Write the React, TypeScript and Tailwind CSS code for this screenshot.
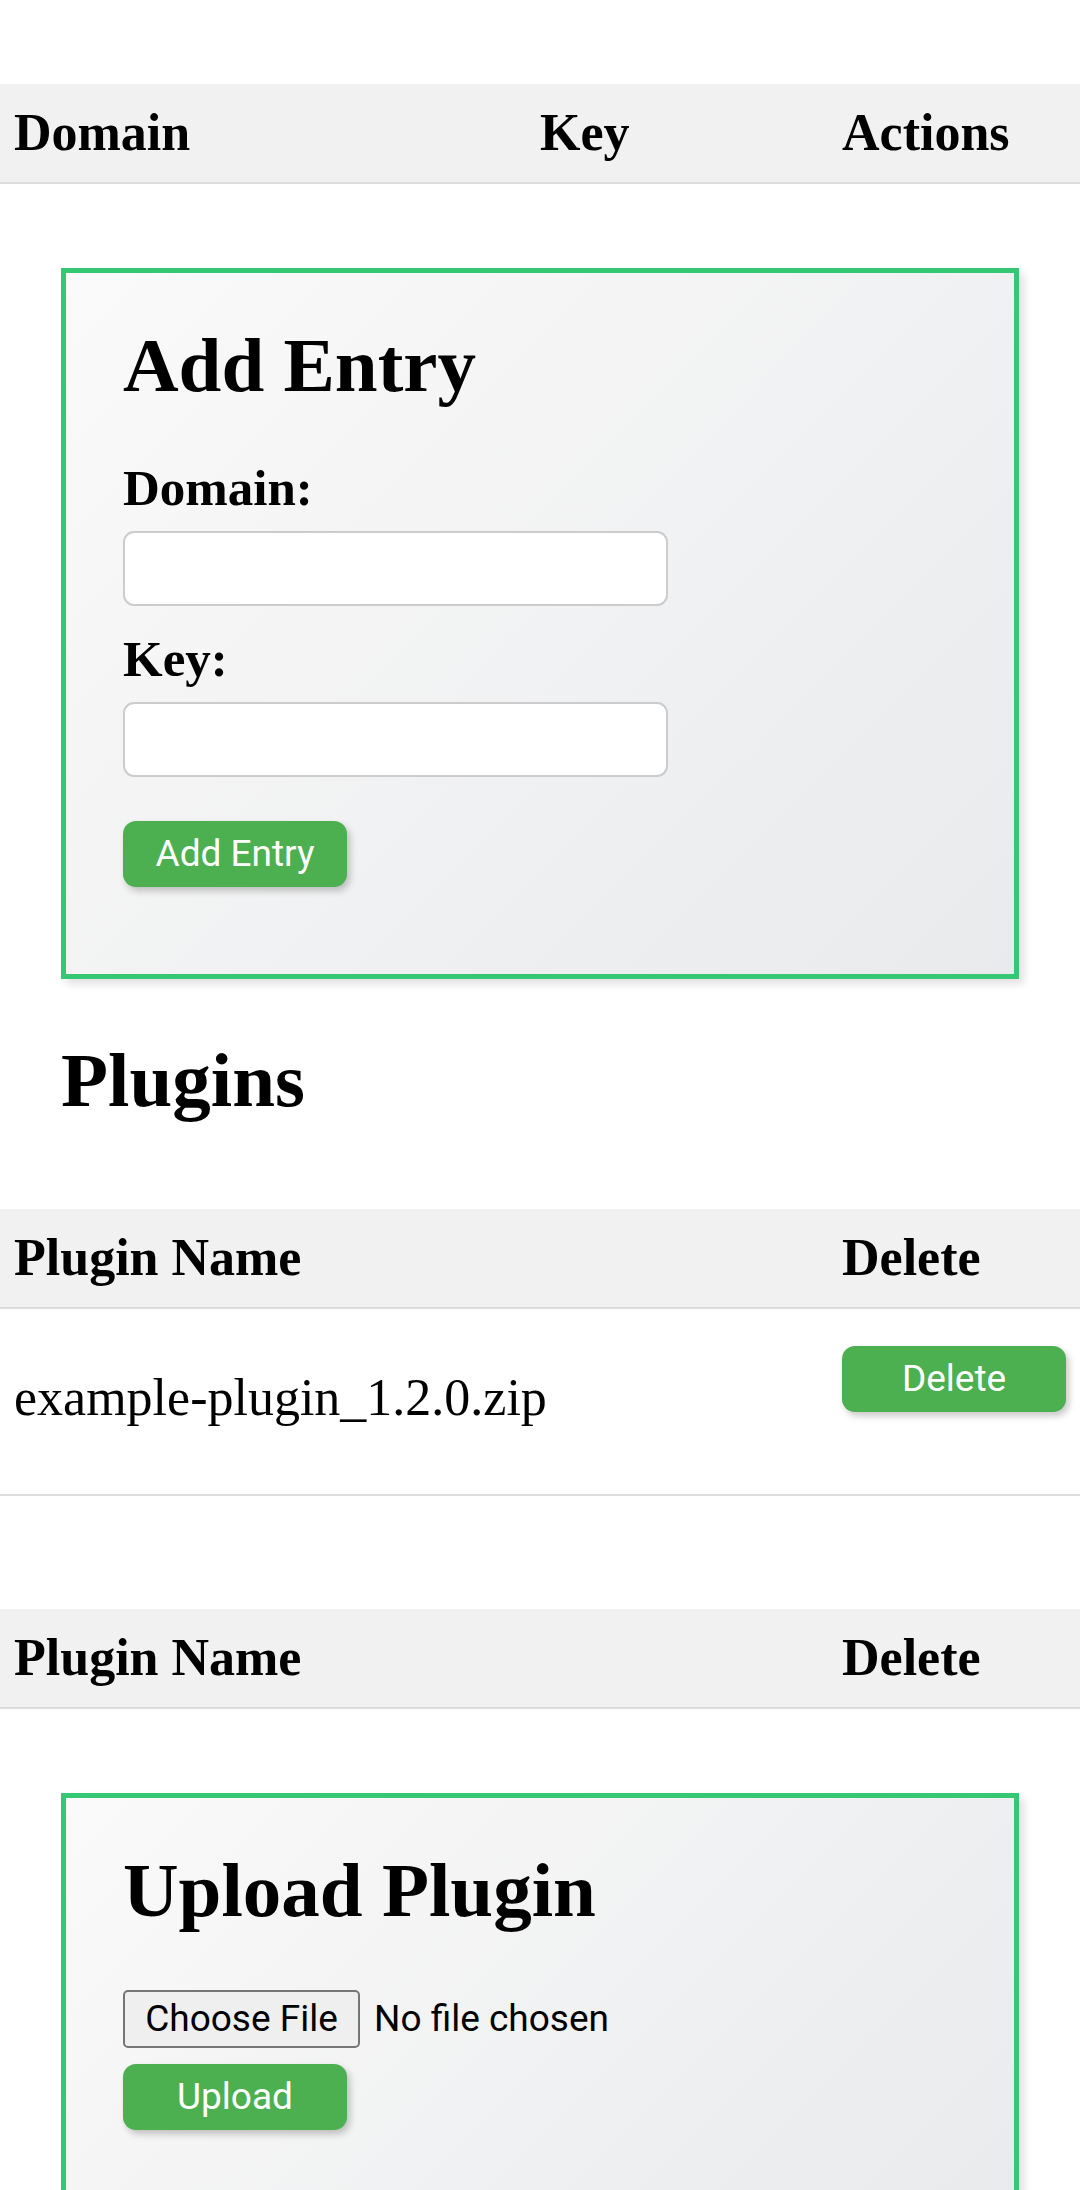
import React from "react";

const serif = "font-['Liberation_Serif',serif]";
const sans = "font-['Roboto',sans-serif]";

function HeaderRow({ cols, template }: { cols: string[]; template: string }) {
  return (
    <div className={`grid ${template} h-[100px] items-center bg-[#f1f1f1] border-b-2 border-[#dddddd]`}>
      {cols.map((c) => (
        <div key={c} className="px-[14px] text-[52px] leading-[60px] font-bold text-black">
          {c}
        </div>
      ))}
    </div>
  );
}

function GreenButton({ label }: { label: string }) {
  return (
    <button
      className={`${sans} w-[224px] h-[66px] rounded-[13px] bg-[#4caf50] text-white text-[37px] leading-[66px] shadow-[3px_4px_7px_rgba(0,0,0,0.22)]`}
    >
      {label}
    </button>
  );
}

function Card({ children }: { children: React.ReactNode }) {
  return (
    <div className="mx-[61px] border-[5px] border-[#35c774] bg-[linear-gradient(135deg,#fafafa,#e9eaec)] px-[57px] pt-[49px] pb-[87px] shadow-[5px_5px_8px_rgba(0,0,0,0.12)]">
      {children}
    </div>
  );
}

function TextInput() {
  return (
    <input
      type="text"
      className="mt-[14px] block w-[545px] h-[75px] rounded-[11px] border-2 border-[#cccccc] bg-white px-[14px] text-[37px] outline-none"
    />
  );
}

export default function App() {
  return (
    <div className={`${serif} min-h-screen bg-white pt-[84px] text-black`}>
      <HeaderRow cols={["Domain", "Key", "Actions"]} template="grid-cols-[526px_302px_1fr]" />

      <div className="mt-[84px]">
        <Card>
          <h2 className="text-[77px] leading-[86px] font-bold">Add Entry</h2>
          <label className="mt-[51px] block text-[51px] leading-[58px] font-bold">Domain:</label>
          <TextInput />
          <label className="mt-[24px] block text-[51px] leading-[58px] font-bold">Key:</label>
          <TextInput />
          <div className="mt-[44px]">
            <GreenButton label="Add Entry" />
          </div>
        </Card>
      </div>

      <h2 className="mt-[58px] ml-[61px] text-[77px] leading-[86px] font-bold">Plugins</h2>

      <div className="mt-[86px]">
        <HeaderRow cols={["Plugin Name", "Delete"]} template="grid-cols-[828px_1fr]" />
        <div className="grid grid-cols-[828px_1fr] h-[187px] border-b-2 border-[#dddddd]">
          <div className="px-[14px] pt-[59px] text-[52px] leading-[60px]">example-plugin_1.2.0.zip</div>
          <div className="px-[14px] pt-[37px]">
            <GreenButton label="Delete" />
          </div>
        </div>
      </div>

      <div className="mt-[113px]">
        <HeaderRow cols={["Plugin Name", "Delete"]} template="grid-cols-[828px_1fr]" />
      </div>

      <div className="mt-[84px]">
        <Card>
          <h2 className="text-[77px] leading-[86px] font-bold">Upload Plugin</h2>
          <div className={`${sans} mt-[57px] flex items-center text-[37px]`}>
            <button className="w-[237px] h-[58px] rounded-[5px] border-2 border-[#767676] bg-[#efefef] text-black leading-[54px]">
              Choose File
            </button>
            <span className="ml-[14px]">No file chosen</span>
          </div>
          <div className="mt-[16px]">
            <GreenButton label="Upload" />
          </div>
        </Card>
      </div>
    </div>
  );
}
